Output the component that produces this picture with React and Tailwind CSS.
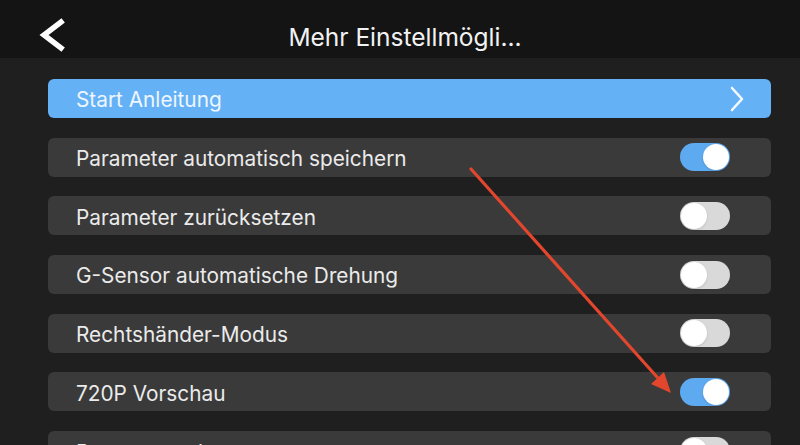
import React from 'react';

const rows = [
  { label: 'Parameter automatisch speichern', on: true },
  { label: 'Parameter zurücksetzen', on: false },
  { label: 'G-Sensor automatische Drehung', on: false },
  { label: 'Rechtshänder-Modus', on: false },
  { label: '720P Vorschau', on: true },
  { label: 'Bewegungsthemen', on: false },
];

const Toggle = ({ on }) => (
  <div
    className={`relative w-[50px] h-[28px] rounded-full ${on ? 'bg-[#5eaaf0]' : 'bg-[#d9d9d9]'}`}
  >
    <div
      className={`absolute top-[1px] w-[26px] h-[26px] rounded-full bg-white shadow-sm ${on ? 'left-[23px]' : 'left-[1px]'}`}
    />
  </div>
);

const Row = ({ label, on }) => (
  <div className="flex items-center justify-between h-[39px] rounded-[6px] bg-[#3a3a3a] pl-[28px] pr-[41px]">
    <span className="text-[20.8px] text-[#ebebeb] pt-[3px]">{label}</span>
    <Toggle on={on} />
  </div>
);

export default function App() {
  return (
    <div
      className="relative w-[800px] h-[445px] overflow-hidden bg-[#1f1f1f]"
      style={{ fontFamily: 'Inter, "Noto Sans", sans-serif' }}
    >
      <header className="relative flex items-center justify-center h-[58px] bg-[#141414]">
        <button className="absolute left-[36px] top-[17px]">
          <svg width="32" height="36" viewBox="0 0 32 36">
            <polyline
              points="25,5 8,18 25,31"
              fill="none"
              stroke="white"
              strokeWidth="5.5"
              strokeLinecap="square"
              strokeLinejoin="miter"
            />
          </svg>
        </button>
        <h1 className="text-[24.5px] text-[#f2f2f2] pt-[16px] pl-[10px]">Mehr Einstellmögli...</h1>
      </header>

      <div className="flex flex-col gap-[19.7px] ml-[48px] w-[723px] pt-[21px]">
        <div className="flex items-center justify-between h-[39px] rounded-[6px] bg-[#65b1f5] pl-[28px] pr-[26px]">
          <span className="text-[20.8px] text-[#eef6ff] pt-[3px]">Start Anleitung</span>
          <svg width="16" height="26" viewBox="0 0 16 26">
            <polyline
              points="3,2 13,13 3,24"
              fill="none"
              stroke="#f4f9ff"
              strokeWidth="2.6"
              strokeLinecap="round"
              strokeLinejoin="round"
            />
          </svg>
        </div>
        {rows.map((r) => (
          <Row key={r.label} label={r.label} on={r.on} />
        ))}
      </div>

      <svg className="absolute left-0 top-0 pointer-events-none" width="800" height="445">
        <line x1="471" y1="169" x2="657" y2="377" stroke="#e2462d" strokeWidth="3.2" strokeLinecap="round" />
        <polygon points="671,393 651,384 664,372" fill="#e2462d" />
      </svg>
    </div>
  );
}
